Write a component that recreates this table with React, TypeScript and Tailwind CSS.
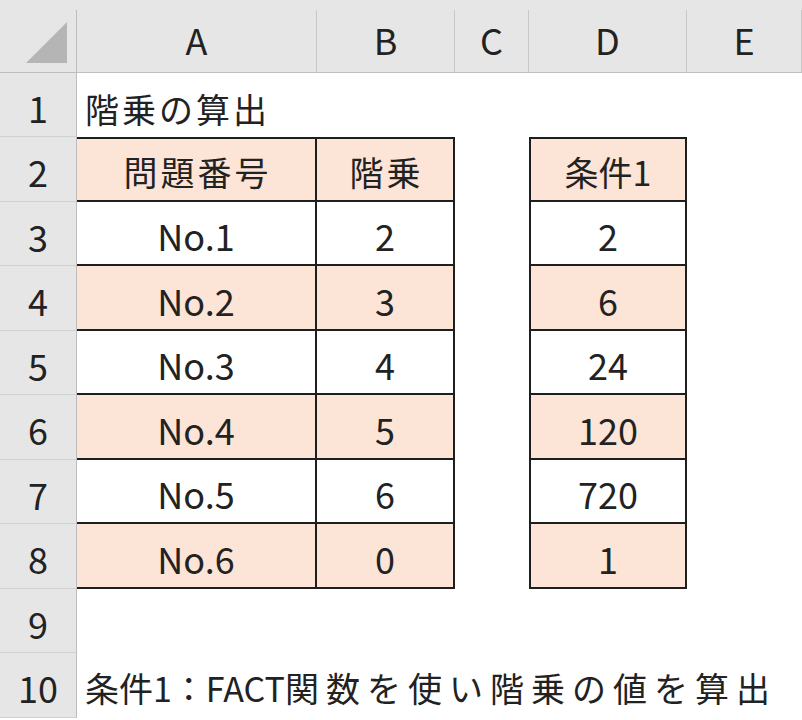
import React from "react";

const font = { fontFamily: '"Noto Sans CJK JP", "Noto Sans", sans-serif' };

const colLetters = ["A", "B", "C", "D", "E"];

// rows 3-8 of the sheet
const data = [
  { a: "No.1", b: "2", d: "2" },
  { a: "No.2", b: "3", d: "6" },
  { a: "No.3", b: "4", d: "24" },
  { a: "No.4", b: "5", d: "120" },
  { a: "No.5", b: "6", d: "720" },
  { a: "No.6", b: "0", d: "1" },
];

function RowHead({ n }: { n: number }) {
  return (
    <div className="bg-[#e6e6e6] border-r border-b border-r-[#bdbdbd] border-b-[#d0d0d0] flex items-center justify-center pt-1">
      {n}
    </div>
  );
}

function Cell({
  children,
  peach,
  top,
  left,
}: {
  children?: React.ReactNode;
  peach?: boolean;
  top?: boolean;
  left?: boolean;
}) {
  return (
    <div
      className={
        "flex items-center justify-center pt-1 border-[#1e1e1e] border-r-2 border-b-2 " +
        (top ? "border-t-2 " : "") +
        (left ? "border-l-2 " : "") +
        (peach ? "bg-[#fce4d6]" : "bg-white")
      }
    >
      {children}
    </div>
  );
}

// kanji in the sheet sit a bit smaller and looser than the digits
const jp = "text-[34px] tracking-[3px]";

export default function App() {
  return (
    <div
      className="w-[802px] h-[720px] overflow-hidden bg-white text-[#222] text-[36px] leading-none"
      style={font}
    >
      <div className="grid grid-cols-[77px_240px_138px_74px_158px_115px] grid-rows-[73px_64px_65px_64px_65px_64px_65px_64px_65px_64px_65px]">
        {/* header row */}
        <div className="bg-[#e6e6e6] border-b border-[#bdbdbd] pt-[10px]">
          <div className="h-full border-r border-[#bdbdbd] flex items-end justify-end pr-[9px] pb-[9px]">
            <svg width="41" height="41" viewBox="0 0 41 41">
              <polygon points="0,41 41,41 41,0" fill="#b5b5b5" />
            </svg>
          </div>
        </div>
        {colLetters.map((c) => (
          <div key={c} className="bg-[#e6e6e6] border-b border-[#bdbdbd] pt-[10px]">
            <div className="h-full border-r border-[#c8c8c8] flex items-center justify-center pb-1">
              {c}
            </div>
          </div>
        ))}

        {/* row 1 */}
        <RowHead n={1} />
        <div className={"col-span-5 flex items-center pl-[8px] pt-2 " + jp}>階乗の算出</div>

        {/* row 2 */}
        <RowHead n={2} />
        <Cell peach top>
          <span className={jp + " pl-[3px]"}>問題番号</span>
        </Cell>
        <Cell peach top>
          <span className={jp + " pl-[3px]"}>階乗</span>
        </Cell>
        <div />
        <Cell peach top left>
          <span className="text-[34px]">条件1</span>
        </Cell>
        <div />

        {/* rows 3-8 */}
        {data.map((r, i) => (
          <React.Fragment key={r.a}>
            <RowHead n={i + 3} />
            <Cell peach={i % 2 === 1}>{r.a}</Cell>
            <Cell peach={i % 2 === 1}>{r.b}</Cell>
            <div />
            <Cell peach={i % 2 === 1} left>{r.d}</Cell>
            <div />
          </React.Fragment>
        ))}

        {/* row 9 */}
        <RowHead n={9} />
        <div className="col-span-5" />

        {/* row 10 */}
        <RowHead n={10} />
        <div className="col-span-5 flex items-center pl-[8px] pt-1 whitespace-nowrap text-[34px]">
          <span>条件1：FACT</span>
          <span className="tracking-[7px]">関数を使い階乗の値を算出</span>
        </div>
      </div>
    </div>
  );
}
